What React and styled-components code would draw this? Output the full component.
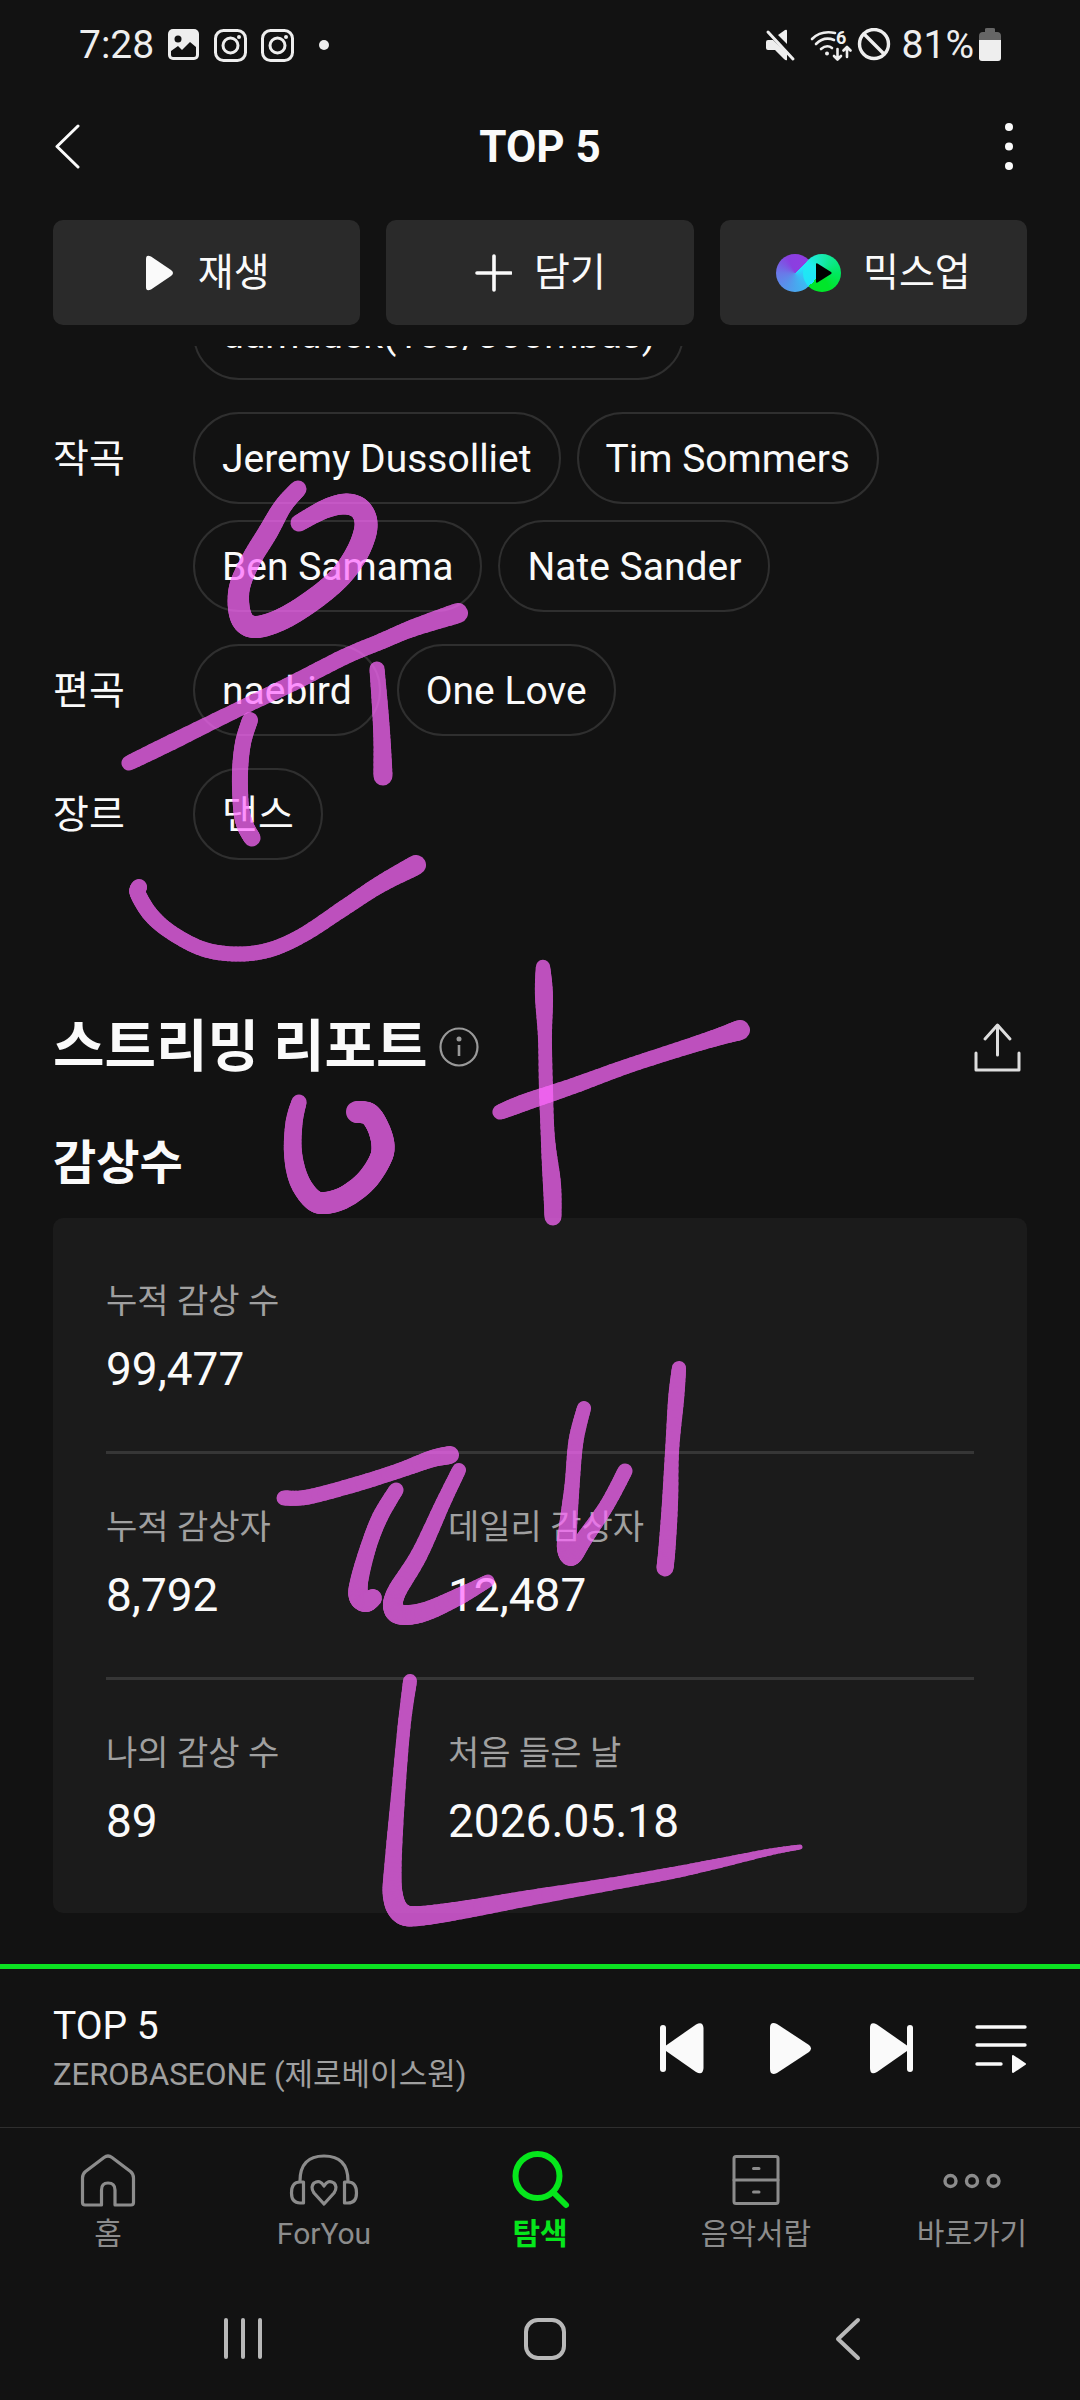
import React from "react";
import styled, { createGlobalStyle } from "styled-components";

const GlobalStyle = createGlobalStyle`
  * {
    box-sizing: border-box;
  }
  body {
    margin: 0;
    background: #121212;
    color: #fafafa;
    font-family: Roboto, "Noto Sans CJK KR", sans-serif;
  }
  button {
    margin: 0;
    padding: 0;
    border: 0;
    background: none;
    color: inherit;
    font: inherit;
  }
  a {
    color: inherit;
    text-decoration: none;
  }
  svg {
    display: block;
    flex: none;
  }
`;

const Screen = styled.div`
  position: relative;
  display: flex;
  flex-direction: column;
  min-height: 100vh;
  overflow: hidden;
`;

const StatusBar = styled.div`
  display: flex;
  justify-content: space-between;
  height: 90px;
  padding: 0 79px;
  color: #eeeeee;
  font-size: 39px;
  line-height: 46px;
`;

const StatusGroup = styled.div`
  display: flex;
  align-items: center;
  gap: ${(props) => props.$gap}px;
`;

const Header = styled.header`
  display: flex;
  align-items: center;
  justify-content: space-between;
  height: 114px;
  padding: 0 53px;
`;

const Title = styled.h1`
  margin: 0;
  font-size: 44px;
  line-height: 54px;
  font-weight: 700;
`;

const Actions = styled.div`
  display: grid;
  grid-template-columns: repeat(3, 1fr);
  gap: 26px;
  padding: 16px 53px 21px;
`;

const ActionButton = styled.button`
  display: flex;
  align-items: center;
  justify-content: center;
  gap: 22px;
  height: 105px;
  border-radius: 10px;
  background: #2a2a2a;
  font-size: 39px;
  line-height: 48px;
`;

const MixLogo = styled.span`
  position: relative;
  display: flex;
  svg {
    position: absolute;
    left: 39px;
    top: 9px;
  }
`;

const MixCircle = styled.span`
  width: 38px;
  height: 38px;
  border-radius: 50%;
  background: conic-gradient(
    from 45deg,
    #22e6ff,
    #2fcdf8 45deg,
    #4aa5ee 135deg,
    #6a78e8 225deg,
    #8a3fe0 290deg,
    #8f3de0
  );
  & + & {
    margin-left: -11px;
    background: conic-gradient(
      from 225deg,
      #20e2fa,
      #20eaf0 80deg,
      #18eab0 135deg,
      #00e860 225deg,
      #00e62a 290deg
    );
  }
`;

const Content = styled.main`
  flex: 1;
  overflow: hidden;
  padding: 0 53px 51px;
`;

/* scrolled a little, so the first row is cut by the button bar */
const Credits = styled.dl`
  display: flex;
  flex-direction: column;
  gap: 32px;
  margin: -58px 0 0;
`;

const CreditRow = styled.div`
  display: flex;
  font-size: 39px;
  line-height: 48px;
`;

const CreditLabel = styled.dt`
  flex: none;
  width: 140px;
  padding: 23px 0 21px;
`;

const CreditValue = styled.dd`
  display: flex;
  flex-wrap: wrap;
  gap: 16px;
  max-width: 780px;
  margin: 0;
`;

const Chip = styled.button`
  height: 92px;
  padding: 2px 27px 0;
  border: 2px solid #2f2f2f;
  border-radius: 46px;
`;

const SectionHead = styled.div`
  display: flex;
  align-items: center;
  gap: 10px;
  margin-top: 152px;
  button:last-child {
    margin-left: auto;
  }
`;

const SectionTitle = styled.h2`
  margin: 0;
  font-size: 56px;
  line-height: 70px;
  font-weight: 700;
`;

const SubTitle = styled.h3`
  margin: 53px 0 27px;
  font-size: 47px;
  line-height: 56px;
  font-weight: 700;
`;

const Card = styled.div`
  padding: 10px 53px;
  border-radius: 10px;
  background: #1b1b1b;
`;

const StatRow = styled.dl`
  display: grid;
  grid-template-columns: 342px 1fr;
  margin: 0;
  padding: 48px 0 51px;
  & + & {
    border-top: 3px solid #363636;
  }
`;

const StatLabel = styled.dt`
  color: #a0a0a0;
  font-size: 34px;
  line-height: 50px;
`;

const StatValue = styled.dd`
  margin: 12px 0 0;
  font-size: 46px;
  line-height: 62px;
`;

const Progress = styled.div`
  height: 5px;
  background: #0ce222;
`;

const Player = styled.section`
  display: flex;
  align-items: center;
  justify-content: space-between;
  height: 158px;
  padding: 0 53px;
`;

const Track = styled.div`
  padding-top: 6px;
`;

const TrackName = styled.div`
  font-size: 39px;
  line-height: 48px;
`;

const TrackArtist = styled.div`
  color: #a0a0a0;
  font-size: 31px;
  line-height: 50px;
`;

const Controls = styled.div`
  display: flex;
  gap: 55px;
`;

const Tabs = styled.nav`
  display: grid;
  grid-template-columns: repeat(5, 1fr);
  padding: 20px 0 24px;
  border-top: 1px solid #2e2e2e;
`;

const Tab = styled.a`
  display: flex;
  flex-direction: column;
  align-items: center;
  gap: 2px;
  color: ${(props) => (props.$active ? "#06e61c" : "#8c8c8c")} !important;
  font-size: 30px;
  line-height: 40px;
  font-weight: ${(props) => (props.$active ? 700 : 400)};
`;

const SystemNav = styled.div`
  display: grid;
  grid-template-columns: repeat(3, 1fr);
  height: 122px;
  padding: 0 81px 0 92px;
  button {
    display: flex;
    align-items: center;
    justify-content: center;
  }
`;

const InkLayer = styled.svg`
  position: absolute;
  top: 0;
  left: 0;
  pointer-events: none;
`;

const credits = [
  { label: "", names: ["damduck(153/Joombas)"] },
  {
    label: "작곡",
    names: ["Jeremy Dussolliet", "Tim Sommers", "Ben Samama", "Nate Sander"],
  },
  { label: "편곡", names: ["naebird", "One Love"] },
  { label: "장르", names: ["댄스"] },
];

const stats = [
  [["누적 감상 수", "99,477"]],
  [
    ["누적 감상자", "8,792"],
    ["데일리 감상자", "12,487"],
  ],
  [
    ["나의 감상 수", "89"],
    ["처음 들은 날", "2026.05.18"],
  ],
];

// every point is [x, y, pen width]
const strokes = [
  [[298, 489, 17], [283, 506, 18], [268, 532, 20], [250, 562, 20], [239, 590, 21], [241, 617, 22], [254, 627, 22], [280, 620, 22], [310, 602, 22], [338, 579, 22], [357, 553, 23], [366, 527, 23], [361, 510, 22], [346, 504, 21], [325, 509, 19], [299, 523, 17]],
  [[129, 763, 15], [172, 742, 16], [241, 708, 15], [293, 683, 16], [344, 657, 16], [382, 641, 16], [413, 628, 17], [458, 613, 20]],
  [[250, 720, 16], [243, 743, 16], [240, 773, 16], [241, 807, 16], [245, 825, 17], [252, 838, 17]],
  [[377, 669, 15], [380, 707, 16], [382, 740, 17], [383, 776, 19]],
  [[139, 887, 16], [138, 894, 16], [151, 915, 16], [172, 933, 15], [203, 949, 15], [236, 954, 15], [269, 950, 15], [303, 935, 15], [344, 908, 16], [379, 885, 17], [416, 865, 20]],
  [[299, 1102, 15], [294, 1123, 17], [293, 1153, 18], [299, 1180, 20], [312, 1199, 21], [325, 1203, 22], [345, 1197, 22], [366, 1181, 22], [380, 1160, 22], [383, 1145, 23], [378, 1127, 22], [369, 1114, 22], [357, 1112, 22]],
  [[543, 967, 14], [544, 997, 18], [545, 1040, 14], [546, 1090, 14], [548, 1140, 14], [552, 1185, 18], [553, 1217, 17]],
  [[500, 1112, 15], [526, 1102, 17], [573, 1086, 16], [625, 1067, 15], [677, 1050, 15], [718, 1037, 17], [740, 1030, 20]],
  [[284, 1498, 15], [308, 1497, 15], [357, 1484, 15], [398, 1471, 15], [431, 1459, 17], [450, 1455, 18]],
  [[396, 1490, 15], [380, 1517, 16], [368, 1548, 16], [359, 1582, 18], [359, 1597, 20], [366, 1602, 20], [373, 1598, 18]],
  [[459, 1470, 14], [443, 1503, 15], [419, 1555, 17], [396, 1593, 19], [394, 1610, 20], [405, 1615, 20], [427, 1611, 19], [460, 1596, 17], [488, 1581, 13]],
  [[584, 1408, 14], [576, 1441, 15], [572, 1486, 15], [568, 1527, 18], [567, 1548, 20], [572, 1556, 19], [584, 1539, 17], [607, 1505, 15], [625, 1471, 15]],
  [[679, 1368, 14], [676, 1400, 16], [672, 1452, 14], [670, 1503, 16], [667, 1548, 17], [665, 1568, 17]],
  [[410, 1681, 14], [404, 1727, 13], [398, 1796, 14], [393, 1865, 17], [393, 1896, 20], [401, 1913, 21], [419, 1916, 20], [468, 1909, 18], [529, 1898, 16], [611, 1884, 13], [672, 1873, 12], [720, 1863, 10], [770, 1852, 7], [800, 1847, 5]],
];

const STEPS = 8;

// Catmull-Rom between two neighbouring points
function spline(a, b, c, d, t) {
  return (
    0.5 *
    (2 * b +
      (c - a) * t +
      (2 * a - 5 * b + 4 * c - d) * t * t +
      (3 * b - a - 3 * c + d) * t * t * t)
  );
}

function smooth(points) {
  const result = [];
  for (let i = 0; i < points.length - 1; i++) {
    const a = points[Math.max(i - 1, 0)];
    const b = points[i];
    const c = points[i + 1];
    const d = points[Math.min(i + 2, points.length - 1)];
    for (let s = 0; s < STEPS; s++) {
      result.push(b.map((_, k) => spline(a[k], b[k], c[k], d[k], s / STEPS)));
    }
  }
  result.push(points[points.length - 1]);
  return result;
}

const Stroke = ({ points }) => {
  const line = smooth(points);
  return (
    <g opacity="0.72" stroke="#ff69ff" strokeLinecap="round">
      {line.slice(1).map((p, i) => (
        <line
          key={i}
          x1={line[i][0]}
          y1={line[i][1]}
          x2={p[0]}
          y2={p[1]}
          strokeWidth={p[2]}
        />
      ))}
    </g>
  );
};

const Ink = () => (
  <InkLayer width="1080" height="2400" aria-hidden="true">
    {strokes.map((points, i) => (
      <Stroke key={i} points={points} />
    ))}
  </InkLayer>
);

const line = {
  fill: "none",
  stroke: "currentColor",
  strokeLinecap: "round",
  strokeLinejoin: "round",
};

const PictureIcon = () => (
  <svg width="32" height="32" viewBox="0 0 32 32">
    <rect x="0" y="0" width="31" height="31" rx="5" fill="#eee" />
    <circle cx="10" cy="10" r="3.5" fill="#121212" />
    <path d="M3 22 L10 17 L14 21 L22 13 L28 18 V26 Q28 28 26 28 H5 Q3 28 3 26Z" fill="#121212" />
  </svg>
);

const InstagramIcon = () => (
  <svg width="33" height="33" viewBox="0 0 33 33" {...line} strokeWidth="3">
    <rect x="1.5" y="1.5" width="30" height="30" rx="8" />
    <circle cx="16.5" cy="16.5" r="7.5" />
    <circle cx="25" cy="8" r="2" fill="currentColor" stroke="none" />
  </svg>
);

const MoreDot = () => (
  <svg width="34" height="10" viewBox="0 0 34 10">
    <circle cx="16" cy="5" r="5" fill="#eee" />
  </svg>
);

const MuteIcon = () => (
  <svg width="40" height="33" viewBox="0 0 40 33" fill="currentColor">
    <path d="M3 11 H8 L22 24 V31 Q21 32 19 30 L10 21 H3 Q1 21 1 19 V13 Q1 11 3 11Z" />
    <path d="M13 6 L20 1 Q22 0 22 2 V15Z" />
    <path d="M3 3 L28 30" {...line} strokeWidth="3" />
  </svg>
);

const WifiIcon = () => (
  <svg width="42" height="34" viewBox="0 0 42 34" {...line} strokeWidth="2.6">
    <path d="M2 11 Q11 2 25 5" />
    <path d="M6 16 Q14 8 24 12" />
    <path d="M11 21 Q17 16 22 20" />
    <circle cx="17" cy="25.5" r="2" fill="currentColor" stroke="none" />
    <path d="M27.500 21 V31 M24 28 L27.500 31.500 L31 28" />
    <path d="M37 29 V19 M33.500 22.500 L37 19 L40.500 22.500" />
    <text x="26" y="16" fill="currentColor" stroke="none" fontSize="18" fontWeight="700">
      6
    </text>
  </svg>
);

const BlockedIcon = () => (
  <svg width="40" height="34" viewBox="0 0 40 34" {...line} strokeWidth="3.4">
    <circle cx="17" cy="16" r="14.500" />
    <path d="M7 6 L27 26" />
  </svg>
);

const BatteryIcon = () => (
  <svg width="22" height="34" viewBox="0 0 22 34">
    <path d="M6 1 Q6 0 8 0 H14 Q16 0 16 1 V4 H18 Q22 4 22 8 V13 H0 V8 Q0 4 4 4 H6Z" fill="#666" />
    <path d="M0 12 H22 V30 Q22 33 19 33 H3 Q0 33 0 30Z" fill="#eee" />
  </svg>
);

const BackIcon = () => (
  <svg width="36" height="46" viewBox="0 0 36 46" {...line} strokeWidth="3">
    <path d="M25 2 L4 22.500 L25 43" />
  </svg>
);

const KebabIcon = () => (
  <svg width="36" height="48" viewBox="0 0 36 48" fill="currentColor">
    <circle cx="18" cy="4" r="4" />
    <circle cx="18" cy="23.500" r="4" />
    <circle cx="18" cy="43" r="4" />
  </svg>
);

const SmallPlayIcon = () => (
  <svg width="32" height="36" viewBox="-1 0 32 36" fill="currentColor">
    <path d="M1 4 Q1 -1 6 1.500 L26 15 Q30 18 26 21 L6 34.500 Q1 37 1 32Z" />
  </svg>
);

const PlusIcon = () => (
  <svg width="38" height="38" viewBox="0 0 38 38" {...line} strokeWidth="3.6">
    <path d="M20 2 V36 M3 19 H37" />
  </svg>
);

const InfoIcon = () => (
  <svg width="42" height="42" viewBox="0 0 42 42" stroke="#999" fill="none">
    <circle cx="21" cy="21" r="18.500" strokeWidth="2.200" />
    <circle cx="21" cy="13" r="2.500" fill="#999" stroke="none" />
    <path d="M21 19 V30" strokeWidth="2.600" />
  </svg>
);

const ShareIcon = () => (
  <svg width="54" height="50" viewBox="0 0 54 50" {...line} stroke="#ddd" strokeWidth="3">
    <path d="M3 31 V48 H46 V31" />
    <path d="M24.500 33 V4 M12 17 L24.500 3 L37 17" />
  </svg>
);

const PrevIcon = () => (
  <svg width="52" height="52" viewBox="0 0 52 52" fill="currentColor">
    <rect x="6" y="3" width="6" height="47" rx="3" />
    <path d="M12 23.500 L42 2.500 Q49 -1 49.500 6 V46 Q49 54 42 50 L12 29Z" />
  </svg>
);

const PlayIcon = () => (
  <svg width="52" height="52" viewBox="0 0 52 52" fill="currentColor">
    <path d="M9 6 Q9 -1 16 2 L48 23 Q52 26.500 48 30 L16 51 Q9 54 9 47Z" />
  </svg>
);

const NextIcon = () => (
  <svg width="52" height="52" viewBox="0 0 52 52" fill="currentColor">
    <path d="M2 6 Q2 -1 9 2.500 L39 23.500 V29 L9 50 Q2 54 2 46Z" />
    <rect x="39" y="3" width="6" height="47" rx="3" />
  </svg>
);

const QueueIcon = () => (
  <svg width="52" height="52" viewBox="0 0 52 52" {...line} strokeWidth="3.400">
    <path d="M2 5 H50 M2 23 H50 M2 42 H26" />
    <path d="M38 34 L50 42 L38 50Z" fill="currentColor" strokeWidth="2" />
  </svg>
);

const HomeIcon = () => (
  <svg width="64" height="64" viewBox="0 0 64 64" {...line} strokeWidth="3.200">
    <path d="M9 57 Q6.500 57 6.500 54.500 V30 Q6.500 26 9.500 23.500 L28 9.500 Q32 6.500 36 9.500 L54.500 23.500 Q57.500 26 57.500 30 V54.500 Q57.500 57 55 57 H39 V42 Q39 35 32 35 Q25.500 35 25.500 42 V57Z" />
  </svg>
);

const HeadphonesIcon = () => (
  <svg width="72" height="64" viewBox="0 0 72 64" {...line} strokeWidth="3.200">
    <path d="M12 33 Q12 8 36 8 Q60 8 60 33" />
    <path d="M15.500 34 V55 H12 Q3.500 55 3.500 45 Q3.500 34 12 34Z" />
    <path d="M56.500 34 V55 H60 Q68.500 55 68.500 45 Q68.500 34 60 34Z" />
    <path d="M36 56 L26 45 Q22 39 26 35 Q32 31 36 38 Q40 31 46 35 Q50 39 46 45Z" />
  </svg>
);

const SearchIcon = () => (
  <svg width="64" height="64" viewBox="0 0 64 64" {...line} strokeWidth="6">
    <circle cx="29.500" cy="28" r="22" />
    <path d="M46 45 L58 57" />
  </svg>
);

const DrawerIcon = () => (
  <svg width="64" height="64" viewBox="0 0 64 64" {...line} strokeWidth="3">
    <rect x="10" y="8.500" width="44" height="47" rx="2" />
    <path d="M10 32 H54 M29.500 20.500 H35 M29.500 44 H35" />
  </svg>
);

const DotsIcon = () => (
  <svg width="64" height="64" viewBox="0 0 64 64" {...line} strokeWidth="3.400">
    <circle cx="10.500" cy="33" r="5.500" />
    <circle cx="32" cy="33" r="5.500" />
    <circle cx="53.500" cy="33" r="5.500" />
  </svg>
);

const tabs = [
  { label: "홈", Icon: HomeIcon },
  { label: "ForYou", Icon: HeadphonesIcon },
  { label: "탐색", Icon: SearchIcon, active: true },
  { label: "음악서랍", Icon: DrawerIcon },
  { label: "바로가기", Icon: DotsIcon },
];

const App = () => {
  return (
    <Screen>
      <GlobalStyle />
      <StatusBar>
        <StatusGroup $gap={14}>
          <span>7:28</span>
          <PictureIcon />
          <InstagramIcon />
          <InstagramIcon />
          <MoreDot />
        </StatusGroup>
        <StatusGroup $gap={5}>
          <MuteIcon />
          <WifiIcon />
          <BlockedIcon />
          <span>81%</span>
          <BatteryIcon />
        </StatusGroup>
      </StatusBar>

      <Header>
        <button aria-label="뒤로">
          <BackIcon />
        </button>
        <Title>TOP 5</Title>
        <button aria-label="더보기">
          <KebabIcon />
        </button>
      </Header>

      <Actions>
        <ActionButton>
          <SmallPlayIcon />
          재생
        </ActionButton>
        <ActionButton>
          <PlusIcon />
          담기
        </ActionButton>
        <ActionButton>
          <MixLogo>
            <MixCircle />
            <MixCircle />
            <svg width="18" height="20" viewBox="0 0 18 20">
              <path d="M1 1 Q1 0 2.500 0.500 L16 9 Q17.500 10 16 11 L2.500 19.500 Q1 20 1 19Z" />
            </svg>
          </MixLogo>
          믹스업
        </ActionButton>
      </Actions>

      <Content>
        <Credits>
          {credits.map((credit) => (
            <CreditRow key={credit.label}>
              <CreditLabel>{credit.label}</CreditLabel>
              <CreditValue>
                {credit.names.map((name) => (
                  <Chip key={name}>{name}</Chip>
                ))}
              </CreditValue>
            </CreditRow>
          ))}
        </Credits>

        <SectionHead>
          <SectionTitle>스트리밍 리포트</SectionTitle>
          <button aria-label="안내">
            <InfoIcon />
          </button>
          <button aria-label="공유">
            <ShareIcon />
          </button>
        </SectionHead>
        <SubTitle>감상수</SubTitle>
        <Card>
          {stats.map((row, i) => (
            <StatRow key={i}>
              {row.map(([label, value]) => (
                <div key={label}>
                  <StatLabel>{label}</StatLabel>
                  <StatValue>{value}</StatValue>
                </div>
              ))}
            </StatRow>
          ))}
        </Card>
      </Content>

      <Progress />
      <Player>
        <Track>
          <TrackName>TOP 5</TrackName>
          <TrackArtist>ZEROBASEONE (제로베이스원)</TrackArtist>
        </Track>
        <Controls>
          <button aria-label="이전 곡">
            <PrevIcon />
          </button>
          <button aria-label="재생">
            <PlayIcon />
          </button>
          <button aria-label="다음 곡">
            <NextIcon />
          </button>
          <button aria-label="재생목록">
            <QueueIcon />
          </button>
        </Controls>
      </Player>

      <Tabs>
        {tabs.map(({ label, Icon, active }) => (
          <Tab key={label} href="#" $active={active}>
            <Icon />
            {label}
          </Tab>
        ))}
      </Tabs>

      <SystemNav>
        <button aria-label="최근 앱">
          <svg width="42" height="44" viewBox="0 0 42 44" {...line} stroke="#b8b8b8" strokeWidth="4">
            <path d="M4 3 V40 M21 3 V40 M38 3 V40" />
          </svg>
        </button>
        <button aria-label="홈 화면">
          <svg width="44" height="44" viewBox="0 0 44 44" {...line} stroke="#b8b8b8" strokeWidth="4">
            <rect x="3" y="3" width="38" height="38" rx="12" />
          </svg>
        </button>
        <button aria-label="뒤로 가기">
          <svg width="30" height="46" viewBox="0 0 30 46" {...line} stroke="#b8b8b8" strokeWidth="4">
            <path d="M25 4 L5 23 L25 42" />
          </svg>
        </button>
      </SystemNav>

      <Ink />
    </Screen>
  );
};

export default App;
